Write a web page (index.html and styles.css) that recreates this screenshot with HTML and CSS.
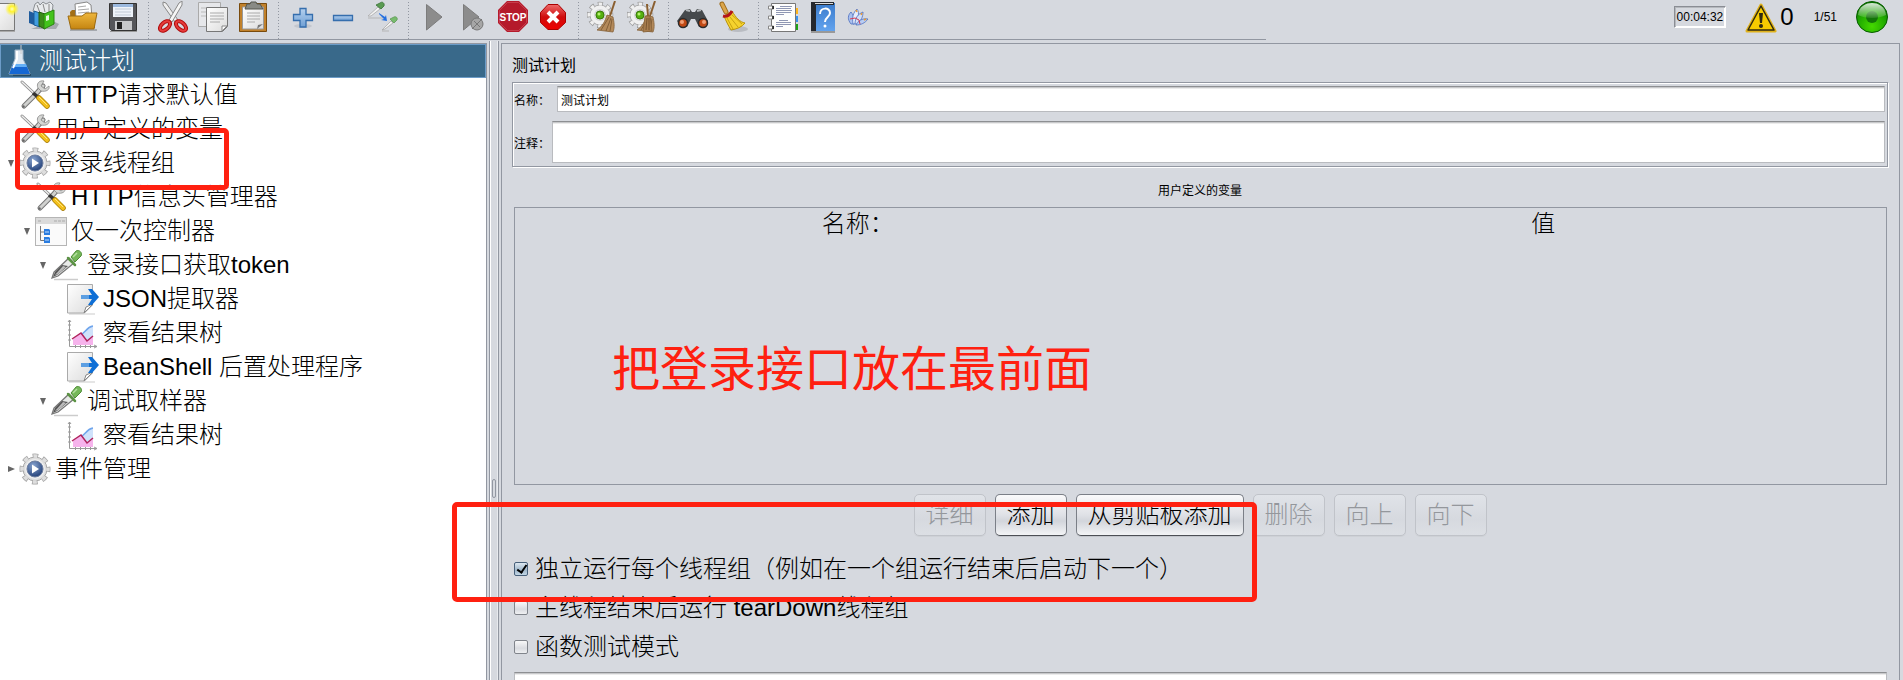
FILE: index.html
```html
<!DOCTYPE html>
<html lang="zh-CN">
<head>
    <meta charset="UTF-8">
    <meta name="viewport" content="width=device-width, initial-scale=1.0">
    <title>测试计划</title>
    <link rel="stylesheet" href="styles.css">
</head>
<body>
    <svg class="defs" aria-hidden="true">
        <defs>
            <linearGradient id="g-paper" x1="0" y1="0" x2="1" y2="1">
                <stop offset="0" stop-color="#fff"/><stop offset="1" stop-color="#dcdcdc"/>
            </linearGradient>
            <linearGradient id="g-folder" x1="0" y1="0" x2="0" y2="1">
                <stop offset="0" stop-color="#eeb63c"/><stop offset="1" stop-color="#c58511"/>
            </linearGradient>
            <linearGradient id="g-blue" x1="0" y1="0" x2="0" y2="1">
                <stop offset="0" stop-color="#b4d0ee"/><stop offset="1" stop-color="#6f9fd4"/>
            </linearGradient>
            <linearGradient id="g-red" x1="0" y1="0" x2="0" y2="1">
                <stop offset="0" stop-color="#ee6a6a"/><stop offset=".5" stop-color="#cf0d0d"/><stop offset="1" stop-color="#e00"/>
            </linearGradient>
            <linearGradient id="g-help" x1="0" y1="0" x2="0" y2="1">
                <stop offset="0" stop-color="#3b7bcb"/><stop offset="1" stop-color="#62a3ee"/>
            </linearGradient>
            <radialGradient id="g-glow">
                <stop offset="0" stop-color="#ffffc0"/><stop offset=".4" stop-color="#fff32e"/><stop offset="1" stop-color="#fff32e" stop-opacity="0"/>
            </radialGradient>
            <radialGradient id="g-green" cx=".5" cy=".8" r=".8">
                <stop offset="0" stop-color="#45d900"/><stop offset=".6" stop-color="#1ea600"/><stop offset="1" stop-color="#0a6d00"/>
            </radialGradient>
            <radialGradient id="g-ball" cx=".4" cy=".3" r=".8">
                <stop offset="0" stop-color="#8aa5d0"/><stop offset="1" stop-color="#17356f"/>
            </radialGradient>
            <linearGradient id="g-shine" x1="0" y1="0" x2="0" y2="1">
                <stop offset="0" stop-color="#fff" stop-opacity=".85"/><stop offset="1" stop-color="#fff" stop-opacity=".1"/>
            </linearGradient>

            <symbol id="i-tools" viewBox="0 0 32 32">
                <path d="M5 27 17 15l7-8" fill="none" stroke="#777" stroke-width="5" stroke-linecap="round"/>
                <path d="M5 27 17 15l7-8" fill="none" stroke="#d0d1cf" stroke-width="3" stroke-linecap="round"/>
                <path d="M30 7l-4 3-4-3 3-5c-5-1-8 3-6 7l3 3c5 1 9-1 8-5z" fill="#d5d6d4" stroke="#888" stroke-width=".8"/>
                <circle cx="4.500" cy="27.500" r="1.200" fill="#666"/>
                <path d="M3 3l15 14" stroke="#888" stroke-width="3" stroke-linecap="round"/>
                <path d="M3 3l14 13" stroke="#eee" stroke-width="1.400" stroke-linecap="round"/>
                <path d="M14 14l6 5" stroke="#333" stroke-width="3.500"/>
                <path d="M20 19l8 8" stroke="#a87d06" stroke-width="5.500" stroke-linecap="round"/>
                <path d="M20 19l8 8" stroke="#f2bf1b" stroke-width="4" stroke-linecap="round"/>
                <path d="M20 18l8 8" stroke="#ffe47c" stroke-width="1"/>
            </symbol>
            <symbol id="i-gear" viewBox="0 0 32 32">
                <circle cx="16" cy="16" r="13" fill="none" stroke="#a6a6a6" stroke-width="5" stroke-dasharray="5.500 4.710" stroke-dashoffset="2.750"/>
                <circle cx="16" cy="16" r="12" fill="#dedede" stroke="#a9a9a9"/>
                <circle cx="16" cy="16" r="13" fill="none" stroke="#dedede" stroke-width="3.500" stroke-dasharray="4 6.210" stroke-dashoffset="2"/>
                <circle cx="16" cy="16" r="10" fill="#efefef"/>
                <circle cx="16" cy="16" r="8" fill="url(#g-ball)" stroke="#6f7f9f"/>
                <path d="M13 11.500l7 4.500-7 4.500z" fill="#fff"/>
            </symbol>
            <symbol id="i-ctrl" viewBox="0 0 32 32">
                <rect x=".5" y="2.500" width="31" height="28" fill="#fafafa" stroke="#b5b5b5"/>
                <path d="M1 3h30v6H1z" fill="#dadada"/>
                <path d="M3 6h3M19 6h3M23 6h3M27 6h3" stroke="#aaa"/>
                <path d="M5.500 11v14.500H10M5.500 17H10" fill="none" stroke="#777"/>
                <path d="M9 14h5l1 1v5H9zM9 22h5l1 1v5H9z" fill="#2b7de0"/>
                <path d="M10 17h4M10 25h4" stroke="#c4e0ff"/>
            </symbol>
            <symbol id="i-dropper" viewBox="0 0 32 32">
                <path d="M3 30.500h24" stroke="#ccc" stroke-width="1.500"/>
                <path d="M18 9l5 5L7 27l-6 2 2-6z" fill="#e8eae8" stroke="#777" stroke-width="1.300"/>
                <path d="M11 16l6 1L6 26l-4 2 2-5z" fill="#555"/>
                <path d="M12 17l3 1-8 7-3 1z" fill="#bbb"/>
                <path d="M17 9l7 7" stroke="#5c9444" stroke-width="2.500" stroke-linecap="round"/>
                <path d="M20 8l5-6c3-2 7 2 5 5l-6 6z" fill="#76b85a" stroke="#4e8c36"/>
                <path d="M22 8l4-4" stroke="#b4e09f" stroke-width="1.500"/>
            </symbol>
            <symbol id="i-post" viewBox="0 0 32 32">
                <path d="M2 31h26" stroke="#ddd" stroke-width="1.500"/>
                <path d="M.5 1.500h25V22l-8 8H.5z" fill="url(#g-paper)" stroke="#aaa"/>
                <path d="M17 30l2-6 7-3z" fill="#fff" stroke="#888"/>
                <path d="M20 12h5l-4-6h4l7 8-7 8h-4l4-6h-5z" fill="#0f6fd6"/>
                <path d="M14 12h8v4h-8z" fill="#5d9fe2"/>
            </symbol>
            <symbol id="i-chart" viewBox="0 0 32 32">
                <path d="M2.500 3v26.500H30M1 8h3M1 13h3M1 18h3M1 23h3M8.500 28v3M13.500 28v3M18.500 28v3M23.500 28v3M1 5l1.500-2L4 5M27 28l3 1.500-3 1.500" fill="none" stroke="#999"/>
                <path d="M6 28v-5c8-4 10-4 14-12l6-2v19z" fill="#cfe2fb"/>
                <path d="M6 28v-6l8-6 6 8 6-4v8z" fill="#f6b3ec"/>
                <path d="M14 17c4 0 5-7 12-8" fill="none" stroke="#6fa5ec" stroke-width="1.500"/>
                <path d="M5 22l9-6 6 8 6-5" fill="none" stroke="#b0225c" stroke-width="1.500"/>
            </symbol>
            <symbol id="i-gearbroom" viewBox="0 0 32 32">
                <circle cx="13" cy="14" r="11" fill="none" stroke="#9d9d9d" stroke-width="4.500" stroke-dasharray="5 3.640" stroke-dashoffset="2.500"/>
                <circle cx="13" cy="14" r="10" fill="#f0f0f0" stroke="#aaa"/>
                <circle cx="13" cy="14" r="11" fill="none" stroke="#f0f0f0" stroke-width="3" stroke-dasharray="3.500 5.140" stroke-dashoffset="1.750"/>
                <circle cx="13" cy="14" r="6" fill="#d4d5d7"/>
                <circle cx="13" cy="14" r="4" fill="#55b010" stroke="#397b08"/>
                <circle cx="12" cy="13" r="1.500" fill="#b5ef6d"/>
                <path d="M28 0l-5 15" stroke="#8a5f30" stroke-width="2"/>
                <path d="M20 14l6 2c1 5 2 10 0 15L10 29c6-4 8-9 10-15z" fill="#b48a5b" stroke="#85623a" stroke-width=".8"/>
                <path d="M22 16l-8 13M24 17l-5 13M25 18l-2 12" stroke="#765430" stroke-width=".8"/>
            </symbol>
        </defs>
    </svg>

    <header class="topbar">
        <div class="toolbar">
            <button type="button" class="tool tool-first" aria-label="新建">
                <svg viewBox="0 0 32 32"><path d="M5 2.500h22.500v27H5z" fill="url(#g-paper)" stroke="#777"/><path d="M5 30.500h23" stroke="#aaa"/><circle cx="25" cy="8" r="7" fill="url(#g-glow)"/></svg>
            </button>
            <button type="button" class="tool" aria-label="模板">
                <svg viewBox="0 0 32 32"><path d="M4 28h25l3-5-6-3z" fill="#a5a9ae"/><path d="M6 10l2-7 3-2 2 3 3-3 3 2 4-2 3 3-1 8-9 3z" fill="#e8eaec" stroke="#8a8e93"/><path d="M10 4l3 8M16 3l2 8M22 3v8" stroke="#888"/><path d="M2 10l5 2v12l-5-2z" fill="#1e5b9d"/><path d="M7 10l6 2v14l-6-2z" fill="#419ce0" stroke="#1c5c96"/><path d="M12 11l6 2v15l-6-3z" fill="#3c8b1b" stroke="#245d0e"/><path d="M17 13l10-4v14l-10 5z" fill="#43c31c" stroke="#2a8511"/><path d="M19 15l3-1v5l-3 1z" fill="#e6f8df"/></svg>
            </button>
            <button type="button" class="tool" aria-label="打开">
                <svg viewBox="0 0 32 32"><path d="M3 29h27" stroke="#a5a9ae" stroke-width="2"/><path d="M3 11l2-2h7l2 4h14v14H4z" fill="#a36f16"/><path d="M8 3l12-2 4 3 1 14H9z" fill="#fff" stroke="#888"/><path d="M11 6l8-1M11 9l11-1M11 12l11-1" stroke="#aaa"/><path d="M1 15h14l4-3h11l-3 16H4z" fill="url(#g-folder)" stroke="#9c6b12"/></svg>
            </button>
            <button type="button" class="tool" aria-label="保存">
                <svg viewBox="0 0 32 32"><path d="M3 30.500h27" stroke="#999"/><path d="M2.500 2.500h27v27h-25l-2-2z" fill="#55565a" stroke="#333"/><path d="M6 3h20v13H6z" fill="#eef3fa"/><path d="M6 3h20v3H6z" fill="#9bb9df"/><path d="M8 8h16M8 11h16M8 14h16" stroke="#c1cad6"/><path d="M8 20h17v9H8z" fill="#c7c8ca"/><path d="M10 21h5v7h-5z" fill="#222"/></svg>
            </button>
            <span class="sep"></span>
            <button type="button" class="tool" aria-label="剪切">
                <svg viewBox="0 0 32 32"><path d="M6 1l3 1 12 17-3 2L6 4z" fill="#eee" stroke="#888"/><path d="M25 0l-3 2-10 17 3 2L25 4z" fill="#f5f5f5" stroke="#888"/><g fill="none" stroke="#b00c0c" stroke-width="4"><ellipse cx="8" cy="25" rx="6" ry="3.500" transform="rotate(-42 8 25)"/><ellipse cx="24" cy="25" rx="6" ry="3.500" transform="rotate(42 24 25)"/></g><g fill="none" stroke="#e63a3a" stroke-width="2"><ellipse cx="8" cy="25" rx="6" ry="3.500" transform="rotate(-42 8 25)"/><ellipse cx="24" cy="25" rx="6" ry="3.500" transform="rotate(42 24 25)"/></g></svg>
            </button>
            <button type="button" class="tool" aria-label="复制">
                <svg viewBox="0 0 32 32"><path d="M1.500 1.500h22v24h-22z" fill="#e6e7ea" stroke="#aaa"/><path d="M4 7h5M4 11h5M4 15h5" stroke="#bbb"/><path d="M9.500 6.500h21v19l-5 5h-16z" fill="url(#g-paper)" stroke="#777"/><path d="M13 12h14M13 15h14M13 18h14M13 21h10" stroke="#aaa"/><path d="M25 30v-5h5z" fill="#fff" stroke="#888"/></svg>
            </button>
            <button type="button" class="tool" aria-label="粘贴">
                <svg viewBox="0 0 32 32"><path d="M2.500 2.500h27v28h-27z" fill="#c1812b" stroke="#7a4b0d"/><path d="M5.500 6h21v22h-21z" fill="url(#g-paper)" stroke="#999"/><path d="M10 12h13M10 15h13M10 18h13M10 21h8" stroke="#aaa"/><path d="M10 3h3l1-2h5l1 2h3l3 5H8z" fill="#888a85" stroke="#55574f"/><path d="M20 28l1-4 5-1z" fill="#777"/></svg>
            </button>
            <span class="sep"></span>
            <button type="button" class="tool" aria-label="展开">
                <svg viewBox="0 0 32 32"><ellipse cx="16" cy="25" rx="9" ry="2" fill="#c3c7ce"/><path d="M13 7.500h6v6h6.500v6H19V26h-6v-6.500H6.500v-6H13z" fill="url(#g-blue)" stroke="#356ead" stroke-width="1.300"/></svg>
            </button>
            <button type="button" class="tool" aria-label="折叠">
                <svg viewBox="0 0 32 32"><path d="M6.500 14.500h19v5h-19z" fill="url(#g-blue)" stroke="#356ead" stroke-width="1.300"/></svg>
            </button>
            <button type="button" class="tool" aria-label="切换">
                <svg viewBox="0 0 32 32"><path d="M1 17h17M15 30h7" stroke="#b5b5b5"/><path d="M1 15l10-9 2 2L4 15z" fill="#f2f2f2" stroke="#aaa" stroke-width=".8"/><path d="M9 4l5 4 3-3c1-3-2-5-4-3z" fill="#5a9b52" stroke="#397235" stroke-width=".8"/><path d="M15 29l9-9 2 2-8 6z" fill="#f2f2f2" stroke="#aaa" stroke-width=".8"/><path d="M23 18l4 4 3-3c1-2-1-4-3-3z" fill="#78bb6e" stroke="#5d9955" stroke-width=".8"/><path d="M12 12l6 4 1-2 1 6-6-1 3-1-5-5z" fill="#246fe0"/></svg>
            </button>
            <span class="sep"></span>
            <button type="button" class="tool" aria-label="启动">
                <svg viewBox="0 0 32 32"><path d="M9.500 3.500L25 16 9.500 29z" fill="#8c8c8c" stroke="#7c7c7c"/></svg>
            </button>
            <button type="button" class="tool" aria-label="不停顿启动">
                <svg viewBox="0 0 32 32"><path d="M6.500 3.500L22 16 6.500 29z" fill="#8c8c8c" stroke="#7c7c7c"/><circle cx="20" cy="23" r="6" fill="#a6a6a6" stroke="#777"/><path d="M15 28l10-10M17 20l6 6" stroke="#777"/></svg>
            </button>
            <button type="button" class="tool" aria-label="停止">
                <svg viewBox="0 0 32 32"><path d="M10 0h12l9 9v13l-9 9H10l-9-9V9z" fill="#b51a2b"/><path d="M10.500 1.500h11l8 8v12l-8 8h-11l-8-8v-12z" fill="none" stroke="#d05763" stroke-width=".6"/><text x="16" y="20" class="stop-text">STOP</text></svg>
            </button>
            <button type="button" class="tool" aria-label="关闭">
                <svg viewBox="0 0 32 32"><path d="M11 3.500h10l7.500 8v10l-7.500 7H11l-7.500-7v-10z" fill="url(#g-red)" stroke="#a00"/><path d="M11 11l10 10M21 11L11 21" stroke="#fff" stroke-width="4"/></svg>
            </button>
            <span class="sep"></span>
            <button type="button" class="tool" aria-label="清除">
                <svg><use href="#i-gearbroom"/></svg>
            </button>
            <button type="button" class="tool" aria-label="清除全部">
                <svg viewBox="0 0 32 32"><use href="#i-gearbroom" width="32" height="32"/><path d="M20 3l1 12" stroke="#8a5f30" stroke-width="2"/><path d="M18 15h5l2 15-9 1z" fill="#a87d4e" stroke="#85623a" stroke-width=".8"/><path d="M20 17l-1 12M22 17v12" stroke="#6e4c29" stroke-width=".8"/></svg>
            </button>
            <span class="sep"></span>
            <button type="button" class="tool" aria-label="搜索">
                <svg viewBox="0 0 32 32"><path d="M8 9l5-1 2 3h3l2-3 5 1 6 11-2 5-7 1-4-8h-4l-4 8-7-1-3-5z" fill="#45494c"/><path d="M9 9l4 1M20 10l4-1" stroke="#b3b7ba" stroke-width="2"/><circle cx="6" cy="22" r="4.500" fill="#c24a15" stroke="#2b2b2b" stroke-width="1.500"/><circle cx="26" cy="22" r="4.500" fill="#c24a15" stroke="#2b2b2b" stroke-width="1.500"/><circle cx="5" cy="21" r="2" fill="#f0a077"/><circle cx="27" cy="21" r="2" fill="#f0a077"/></svg>
            </button>
            <button type="button" class="tool" aria-label="重置搜索">
                <svg viewBox="0 0 32 32"><ellipse cx="21" cy="28" rx="10" ry="3" fill="#b9bcc2"/><path d="M5 3l4 8" stroke="#9d6a1a" stroke-width="5" stroke-linecap="round"/><path d="M5 3l4 8" stroke="#dba64d" stroke-width="3" stroke-linecap="round"/><path d="M7 15l8-5c4 7 8 11 13 12-3 4-8 6-14 7-3-5-5-9-7-14z" fill="#f5d22d" stroke="#b8920d"/><path d="M10 17l6 11M13 16l8 10M15 14l10 9" stroke="#c8a313"/><path d="M6 15c4 1 7-1 9-5" fill="none" stroke="#b3151b" stroke-width="3"/></svg>
            </button>
            <span class="sep"></span>
            <button type="button" class="tool" aria-label="函数助手">
                <svg viewBox="0 0 32 32"><path d="M27 7h4v6h-4z" fill="#ffb51f"/><path d="M27 15h4v6h-4z" fill="#3b93ef"/><path d="M27 23h4v6h-4z" fill="#1fa415"/><path d="M4.500 2.500h24v28h-24z" fill="#fdfdfd" stroke="#777"/><path d="M1.500 5h5v3h-5zM1.500 15h5v3h-5zM1.500 25h5v3h-5z" fill="#fff" stroke="#888"/><path d="M6 5v3M6 15v3M6 25v3" stroke="#111" stroke-width="1.500"/><path d="M13 5.500h12M9 7.500h15M9 9.500h16M9 11.500h15M9 13.500h8M12 19.500h9M9 21.500h15M9 23.500h15M9 25.500h7" stroke="#8f97b3"/></svg>
            </button>
            <button type="button" class="tool" aria-label="帮助">
                <svg viewBox="0 0 32 32"><path d="M4 31h24" stroke="#999" stroke-width="2"/><path d="M4 2h24v28H4z" fill="url(#g-help)"/><path d="M4 1h23v3H9v26H4z" fill="#25282e"/><path d="M8 2h18v1H8z" fill="#ddd"/><path d="M13 13c0-7 10-7 10-1 0 4-5 4-5 9" fill="none" stroke="#fff" stroke-width="2"/><circle cx="18" cy="25" r="1.500" fill="#fff"/></svg>
            </button>
            <button type="button" class="tool" aria-label="羽毛">
                <svg viewBox="0 0 32 32"><g stroke="#4c6fc0" stroke-width=".8"><path d="M4 23c-4-5-3-9 0-12 3 4 4 7 3 12z" fill="#a9c0ee"/><path d="M6 23c-1-7 0-11 4-15 3 4 1 10-2 15z" fill="#e7eefb"/><path d="M8 23c0-6 3-10 8-12 0 5-2 9-6 12z" fill="#d3dff7"/><path d="M9 24c2-4 6-7 12-6-3 4-7 6-12 6z" fill="#b9cdf2"/></g><path d="M3 18l5-1 4 2 1 4" fill="none" stroke="#d23b53"/><path d="M9 9l1 2M15 12l-1 2M19 18l-2 1" stroke="#e89a35" stroke-width="1.500"/></svg>
            </button>
        </div>
        <div class="status">
            <output class="clock">00:04:32</output>
            <svg class="icon" viewBox="0 0 32 32"><path d="M16 4l14 26H2z" fill="#f5c800" stroke="#e0b21b" stroke-width="3" stroke-linejoin="round"/><path d="M16 5l13 24H3z" fill="#f6cb00" stroke="#2f2a10" stroke-width="1.500" stroke-linejoin="round"/><path d="M14 12h4l-1 10h-2z" fill="#2f2a10"/><circle cx="16" cy="25" r="2" fill="#2f2a10"/></svg>
            <span class="errors">0</span>
            <span class="threads">1/51</span>
            <svg class="icon" viewBox="0 0 32 32"><circle cx="16" cy="16" r="15.500" fill="url(#g-green)" stroke="#075c00"/><circle cx="16" cy="16" r="6" fill="#137508"/><path d="M2 14C3 5 10 2 16 2s13 3 14 12c-7 4-21 4-28 0z" fill="url(#g-shine)"/></svg>
        </div>
    </header>

    <main class="workspace">
        <nav class="tree-pane">
            <div class="row selected">
                <svg class="icon" viewBox="0 0 32 32"><path d="M10 30h18" stroke="#244a66" stroke-width="2"/><path d="M12 5h8v9l7 15H6l6-15z" fill="#dfe9f2" stroke="#a5b8c8"/><path d="M18 0v9" stroke="#ccc"/><path d="M10 19h13l4 10H6z" fill="#1768d3"/><path d="M11 19h12l1 3H10z" fill="#65b0f6"/><path d="M14 6v8l-4 9" fill="none" stroke="#fff" stroke-width="2"/></svg>
                <span>测试计划</span>
            </div>
            <ul class="tree">
                <li>
                    <div class="row"><i class="twisty"></i><svg class="icon"><use href="#i-tools"/></svg><span>HTTP请求默认值</span></div>
                </li>
                <li>
                    <div class="row"><i class="twisty"></i><svg class="icon"><use href="#i-tools"/></svg><span>用户定义的变量</span></div>
                </li>
                <li>
                    <div class="row"><i class="twisty open"></i><svg class="icon"><use href="#i-gear"/></svg><span>登录线程组</span></div>
                    <ul>
                        <li>
                            <div class="row"><i class="twisty"></i><svg class="icon"><use href="#i-tools"/></svg><span>HTTP信息头管理器</span></div>
                        </li>
                        <li>
                            <div class="row"><i class="twisty open"></i><svg class="icon"><use href="#i-ctrl"/></svg><span>仅一次控制器</span></div>
                            <ul>
                                <li>
                                    <div class="row"><i class="twisty open"></i><svg class="icon"><use href="#i-dropper"/></svg><span>登录接口获取token</span></div>
                                    <ul>
                                        <li><div class="row"><i class="twisty"></i><svg class="icon"><use href="#i-post"/></svg><span>JSON提取器</span></div></li>
                                        <li><div class="row"><i class="twisty"></i><svg class="icon"><use href="#i-chart"/></svg><span>察看结果树</span></div></li>
                                        <li><div class="row"><i class="twisty"></i><svg class="icon"><use href="#i-post"/></svg><span>BeanShell 后置处理程序</span></div></li>
                                    </ul>
                                </li>
                                <li>
                                    <div class="row"><i class="twisty open"></i><svg class="icon"><use href="#i-dropper"/></svg><span>调试取样器</span></div>
                                    <ul>
                                        <li><div class="row"><i class="twisty"></i><svg class="icon"><use href="#i-chart"/></svg><span>察看结果树</span></div></li>
                                    </ul>
                                </li>
                            </ul>
                        </li>
                    </ul>
                </li>
                <li>
                    <div class="row"><i class="twisty closed"></i><svg class="icon"><use href="#i-gear"/></svg><span>事件管理</span></div>
                </li>
            </ul>
        </nav>

        <div class="divider"><span class="grip"></span></div>

        <section class="editor">
            <h1 class="title">测试计划</h1>
            <div class="props">
                <div class="field field-name">
                    <label for="plan-name">名称：</label>
                    <input type="text" id="plan-name" class="box" value="测试计划">
                </div>
                <div class="field field-comment">
                    <label for="plan-comment">注释：</label>
                    <textarea id="plan-comment" class="box"></textarea>
                </div>
            </div>

            <h2 class="subtitle">用户定义的变量</h2>
            <div class="vars">
                <table>
                    <thead>
                        <tr><th>名称：</th><th>值</th></tr>
                    </thead>
                    <tbody></tbody>
                </table>
            </div>

            <div class="actions">
                <button type="button" class="btn" disabled>详细</button>
                <button type="button" class="btn">添加</button>
                <button type="button" class="btn">从剪贴板添加</button>
                <button type="button" class="btn" disabled>删除</button>
                <button type="button" class="btn" disabled>向上</button>
                <button type="button" class="btn" disabled>向下</button>
            </div>

            <div class="options">
                <label class="option"><input type="checkbox" checked>独立运行每个线程组（例如在一个组运行结束后启动下一个）</label>
                <label class="option"><input type="checkbox">主线程结束后运行 tearDown线程组</label>
                <label class="option"><input type="checkbox">函数测试模式</label>
            </div>

            <textarea class="box classpath" aria-label="classpath"></textarea>
        </section>
    </main>

    <div class="mark mark-group"></div>
    <div class="mark mark-option"></div>
    <p class="note">把登录接口放在最前面</p>
</body>
</html>
```
FILE: styles.css
```css
* {
    box-sizing: border-box;
}
body {
    margin: 0;
    height: 100vh;
    display: flex;
    flex-direction: column;
    position: relative;
    overflow: hidden;
    background: #d6d9df;
    color: #000;
    font-family: "Liberation Sans", "Noto Sans CJK SC", sans-serif;
    font-size: 24px;
    font-weight: 300;
}
ul {
    list-style: none;
    margin: 0;
    padding: 0;
}
.defs {
    position: absolute;
    width: 0;
    height: 0;
}
.icon {
    width: 32px;
    height: 32px;
    flex: none;
}

/* toolbar */
.topbar {
    display: flex;
    justify-content: space-between;
    height: 43px;
    flex: none;
}
.toolbar {
    display: flex;
    flex: 0 1 1266px;
    height: 40px;
    border-bottom: 1px solid #9297a1;
}
.tool {
    width: 40px;
    height: 34px;
    padding: 1px 4px;
    border: none;
    background: none;
    flex: none;
}
.tool svg {
    display: block;
    width: 32px;
    height: 32px;
    flex: none;
}
/* first button is scrolled half out of the window */
.tool-first {
    display: flex;
    justify-content: flex-end;
    width: 23px;
    padding-left: 0;
    overflow: hidden;
}
.stop-text {
    font-family: "Liberation Sans", sans-serif;
    font-size: 10px;
    font-weight: bold;
    fill: #fff;
    text-anchor: middle;
}
.sep {
    width: 10px;
    background: repeating-linear-gradient(#9297a1 0 1px, transparent 1px 3px) 5px 2px / 1px 100% no-repeat;
}
.status {
    display: flex;
    align-items: center;
    height: 34px;
    padding-right: 15px;
}
.clock {
    border: 1px solid;
    border-color: #8a8d94 #fff #fff #8a8d94;
    box-shadow: inset 1px 1px #b5b8bd, inset -1px -1px #fff;
    padding: 2px;
    margin-right: 19px;
    font-size: 12px;
    line-height: 16px;
}
.errors {
    margin: 0 20px 0 3px;
}
.threads {
    margin-right: 19px;
    font-size: 12px;
}

/* panes */
.workspace {
    display: flex;
    flex: 1;
    min-height: 0;
}
.tree-pane {
    width: 487px;
    flex: none;
    background: #fff;
    border-top: 1px solid #9297a1;
    border-right: 1px solid #9297a1;
}
.row {
    display: flex;
    align-items: center;
    height: 34px;
    padding-left: 3px;
    line-height: 32px;
    white-space: nowrap;
}
.row span {
    margin-left: 4px;
}
.selected {
    background: #39698a;
    color: #fff;
    box-shadow: inset 0 0 0 1px #6c9cc8;
}
.tree ul {
    padding-left: 16px;
}
.twisty {
    display: flex;
    justify-content: center;
    width: 16px;
    flex: none;
}
.open::before {
    content: "";
    border: 3px solid transparent;
    border-top: 7px solid #666;
    border-bottom: none;
}
.closed::before {
    content: "";
    border: 3px solid transparent;
    border-left: 7px solid #666;
    border-right: none;
}
.divider {
    display: flex;
    align-items: flex-start;
    justify-content: center;
    width: 10px;
    margin: -2px 2px 0;
    padding-top: 438px;
    flex: none;
    border-left: 1px solid #9297a1;
    border-right: 1px solid #9297a1;
    box-shadow: inset 1px 0 #fff, inset -1px 0 #e8eaee;
}
.grip {
    width: 4px;
    height: 19px;
    border: 1px solid #9297a1;
    border-radius: 2px;
}
.editor {
    display: flex;
    flex: 1;
    flex-direction: column;
    min-width: 0;
    margin-right: 3px;
    padding: 10px 11px 0 10px;
    border: 1px solid #9297a1;
    border-bottom: none;
}

/* form */
.title {
    margin: 0 0 4px;
    font-size: 16px;
    font-weight: 400;
    line-height: 24px;
}
.props {
    display: flex;
    flex-direction: column;
    gap: 9px;
    padding: 3px 2px 3px 1px;
    border: 1px solid #9297a1;
    box-shadow: 1px 1px #fff, inset 1px 1px #fff;
    font-size: 12px;
    font-weight: 400;
}
.field {
    display: flex;
    align-items: center;
}
.field-name {
    gap: 7px;
}
.field-comment {
    gap: 2px;
}
.box {
    display: block;
    margin: 0;
    border: 1px solid #b9bbbf;
    border-top-color: #8d8f92;
    border-radius: 0;
    background: #fff;
    box-shadow: inset 0 1px #c8c9cb, inset 0 2px #ececec;
    color: #000;
    outline: none;
    resize: none;
    font: inherit;
}
.field .box {
    flex: 1;
    height: 26px;
    padding: 0 3px;
}
.field textarea.box {
    height: 42px;
}
.subtitle {
    margin: 14px 0 6px;
    font-size: 12px;
    font-weight: 400;
    line-height: 20px;
    text-align: center;
}
.vars {
    min-height: 278px;
    margin: 0 1px 0 2px;
    border: 1px solid #9297a1;
}
.vars table {
    width: 100%;
    border-collapse: collapse;
    table-layout: fixed;
}
.vars th {
    padding: 0;
    font-weight: 300;
    line-height: 32px;
}
.actions {
    display: flex;
    justify-content: center;
    gap: 9px;
    margin-top: 9px;
}
.btn {
    height: 42px;
    padding: 0 11px;
    border: 1px solid #7b7f87;
    border-bottom-color: #4c4f55;
    border-radius: 5px;
    background: linear-gradient(#fafafb, #dfe1e6 50%, #d2d5db 65%, #f3f4f6);
    box-shadow: 0 1px #c2c5cb;
    color: #000;
    font: inherit;
    line-height: 32px;
}
.btn:disabled {
    border-color: #c0c3c9;
    background: linear-gradient(#e0e3e8, #d6d9df 60%, #dcdfe4);
    box-shadow: 0 1px #ced1d6;
    color: #94979c;
}
.options {
    margin: 13px 0 6px 2px;
}
.option {
    display: flex;
    align-items: center;
    gap: 7px;
    height: 39px;
    line-height: 32px;
}
.option input {
    appearance: none;
    width: 14px;
    height: 14px;
    margin: 0;
    border: 1px solid #80848b;
    border-radius: 2px;
    background: linear-gradient(#f8f8f9, #d9dbe0 60%, #eff0f2);
    position: relative;
}
.option input:checked {
    border-color: #47607a;
    background: linear-gradient(#dde8f1, #9fb6ca 60%, #c3d7e6);
}
.option input:checked::after {
    content: "";
    position: absolute;
    left: 4px;
    top: 0;
    width: 4px;
    height: 8px;
    border: solid #000;
    border-width: 0 2px 2px 0;
    transform: rotate(35deg);
}
.classpath {
    flex: 1;
    min-height: 8px;
    margin: 0 1px 0 2px;
    border-bottom: none;
    padding: 0;
}

/* marks drawn over the window */
.mark {
    position: absolute;
    border: 5px solid #ff2010;
    border-radius: 5px;
    pointer-events: none;
}
.mark-group {
    left: 15px;
    top: 128px;
    width: 214px;
    height: 62px;
}
.mark-option {
    left: 452px;
    top: 502px;
    width: 805px;
    height: 100px;
}
.note {
    position: absolute;
    left: 612px;
    top: 340px;
    margin: 0;
    color: #ff2010;
    font-size: 48px;
    font-weight: 400;
    line-height: 60px;
    white-space: nowrap;
}
```
